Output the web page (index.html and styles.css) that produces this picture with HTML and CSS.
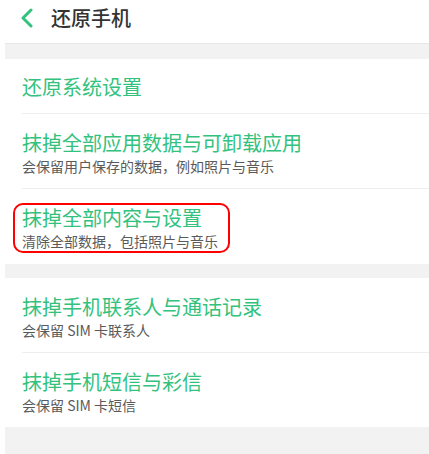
FILE: index.html
```html
<!DOCTYPE html>
<html lang="zh-CN">
<head>
    <meta charset="UTF-8">
    <meta name="viewport" content="width=device-width, initial-scale=1.0">
    <title>还原手机</title>
    <link rel="stylesheet" href="styles.css">
</head>
<body>
    <div class="page">
        <header class="top-bar">
            <svg class="back-icon" width="12" height="20" viewBox="0 0 12 20">
                <path d="M10 2 L2 10 L10 18" fill="none" stroke="#33c27d" stroke-width="3" stroke-linecap="round" stroke-linejoin="round"/>
            </svg>
            <h1 class="page-title">还原手机</h1>
        </header>

        <div class="gap"></div>

        <section class="group">
            <div class="item single">
                <div class="item-title">还原系统设置</div>
            </div>
            <div class="item">
                <div class="item-title">抹掉全部应用数据与可卸载应用</div>
                <div class="item-desc">会保留用户保存的数据，例如照片与音乐</div>
            </div>
            <div class="item">
                <div class="marked">
                    <div class="item-title">抹掉全部内容与设置</div>
                    <div class="item-desc">清除全部数据，包括照片与音乐</div>
                </div>
            </div>
        </section>

        <div class="gap small"></div>

        <section class="group">
            <div class="item">
                <div class="item-title">抹掉手机联系人与通话记录</div>
                <div class="item-desc">会保留 SIM 卡联系人</div>
            </div>
            <div class="item">
                <div class="item-title">抹掉手机短信与彩信</div>
                <div class="item-desc">会保留 SIM 卡短信</div>
            </div>
        </section>

        <div class="gap tall"></div>
    </div>
</body>
</html>
```

FILE: styles.css
```css
:root {
    --green: #33c27d;
    --text-dark: #333333;
    --text-gray: #5a5a5a;
    --band: #f2f2f2;
    --line: #eeeeee;
}

body {
    margin: 0;
    background: #ffffff;
    font-family: "Noto Sans CJK SC", "Noto Sans", sans-serif;
}

.page {
    margin-left: 5px;
}

.top-bar {
    display: flex;
    align-items: center;
    height: 35px;
    padding-bottom: 8px;
    border-bottom: 1px solid #e6e6e6;
}

.back-icon {
    margin-left: 16px;
    margin-right: 18px;
}

.page-title {
    margin: 0;
    font-size: 20px;
    font-weight: 500;
    line-height: 26px;
    color: var(--text-dark);
}

.gap {
    height: 15px;
    background: var(--band);
}

.gap.small {
    height: 14px;
}

.gap.tall {
    height: 28px;
}

.item {
    margin-left: 17px;
    padding: 16px 0 12px;
    border-bottom: 1px solid var(--line);
}

.item:last-child {
    border-bottom: none;
}

.item.single {
    padding: 15px 0 13px;
}

.item-title {
    font-size: 20px;
    line-height: 26px;
    color: var(--green);
}

.item-desc {
    font-size: 14px;
    line-height: 20px;
    color: var(--text-gray);
}

.marked {
    display: inline-block;
    margin: -2px 0 -2px -9px;
    padding: 0 10px 0 7px;
    border: 2px solid #ff0000;
    border-radius: 10px;
}
```
